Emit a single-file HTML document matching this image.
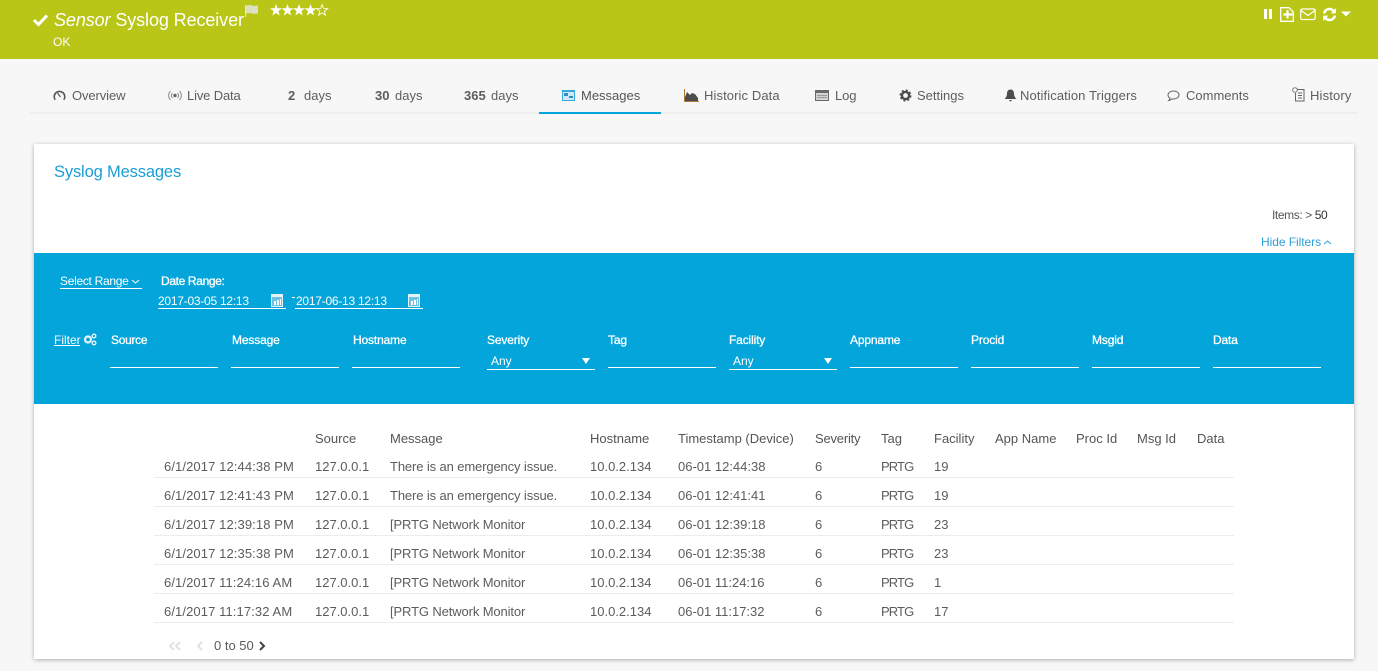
<!DOCTYPE html>
<html><head><meta charset="utf-8"><style>
html,body{margin:0;padding:0;width:1378px;height:671px;overflow:hidden;background:#f7f7f7;font-family:"Liberation Sans",sans-serif;color:#5c5c5c}
.a,svg.i{position:absolute}
.a{white-space:nowrap;line-height:16px;font-size:13px}
.tab{top:88px;color:#5e5e5e}
.th{top:431px;color:#555}
.td{color:#5c5c5c}
.w{color:#fff}
.s{font-size:12px;letter-spacing:-.25px}
.f{top:332px;font-size:12px;letter-spacing:-.15px;-webkit-text-stroke:.3px #fff;color:#fff}
.dt{letter-spacing:.1px}
.m{letter-spacing:-.12px}
.p{letter-spacing:-.9px}
.l{position:absolute;background:#fff;height:1px}
.r{position:absolute;left:154px;width:1080px;height:1px;background:#ececec}
</style></head><body>
<div class="a" style="left:0;top:0;width:1378px;height:59px;background:#b9c617"></div>
<svg class="i" style="left:32px;top:13px" width="17" height="14" viewBox="0 0 17 14"><path d="M2 7l4.500 4.500L15 2.500" fill="none" stroke="#fff" stroke-width="3"/></svg>
<div class="a w" style="left:54px;top:9px;font-size:18px;line-height:22px;letter-spacing:-.1px"><i>Sensor</i> Syslog Receiver</div>
<div class="a w" style="left:53px;top:34px;font-size:12px">OK</div>
<svg class="i" style="left:244px;top:4px" width="16" height="14" viewBox="0 0 16 14"><path d="M2 1.500l5-.5 2 1 5-.5v8l-5 .5-2-1-5 .5z" fill="#dcdfc0"/><path d="M1.500 1v12" stroke="#e8eac8"/></svg>
<svg class="i" style="left:270px;top:4px" width="60" height="13" viewBox="0 0 60 13">
<polygon fill="#fff" points="6,0 7.500,4.200 12,4.400 8.400,7.100 9.700,11.500 6,9 2.300,11.500 3.600,7.100 0,4.400 4.500,4.200"/>
<polygon fill="#fff" transform="translate(11.500 0)" points="6,0 7.500,4.200 12,4.400 8.400,7.100 9.700,11.500 6,9 2.300,11.500 3.600,7.100 0,4.400 4.500,4.200"/>
<polygon fill="#fff" transform="translate(23 0)" points="6,0 7.500,4.200 12,4.400 8.400,7.100 9.700,11.500 6,9 2.300,11.500 3.600,7.100 0,4.400 4.500,4.200"/>
<polygon fill="#fff" transform="translate(34.500 0)" points="6,0 7.500,4.200 12,4.400 8.400,7.100 9.700,11.500 6,9 2.300,11.500 3.600,7.100 0,4.400 4.500,4.200"/>
<polygon fill="none" stroke="#fff" stroke-width=".9" transform="translate(46.500 .5) scale(.93)" points="6,0 7.500,4.200 12,4.400 8.400,7.100 9.700,11.500 6,9 2.300,11.500 3.600,7.100 0,4.400 4.500,4.200"/>
</svg>
<svg class="i" style="left:1264px;top:8px" width="9" height="12"><rect x="0" y="1" width="3" height="10" fill="#fff"/><rect x="5" y="1" width="3" height="10" fill="#fff"/></svg>
<svg class="i" style="left:1280px;top:7px" width="14" height="15" viewBox="0 0 14 15"><path d="M.7.700h8.300l4.300 4.300v9.300H.7z" fill="none" stroke="#fff" stroke-width="1.300"/><path d="M7.500 3v8.500M3.500 7.500h9" stroke="#fff" stroke-width="2.200"/></svg>
<svg class="i" style="left:1300px;top:8px" width="16" height="13" viewBox="0 0 16 13"><rect x=".7" y="1" width="14.500" height="10.500" rx="1.500" fill="none" stroke="#fff" stroke-width="1.200"/><path d="M1 2.500l7 5 7-5" fill="none" stroke="#fff" stroke-width="1.200"/></svg>
<svg class="i" style="left:1322px;top:7px" width="15" height="15" viewBox="0 0 14 14"><path d="M2 6a5 5 0 0 1 9-2M12 8a5 5 0 0 1-9 2" fill="none" stroke="#fff" stroke-width="2.400"/><path d="M13 1v5H8zM1 13V8h5z" fill="#fff"/></svg>
<svg class="i" style="left:1341px;top:11px" width="10" height="6"><path d="M0 .5h10L5 5.500z" fill="#fff"/></svg>

<div class="a" style="left:30px;top:112px;width:1328px;height:2px;background:#efefef"></div>
<div class="a" style="left:539px;top:112px;width:122px;height:2px;background:#03a5da"></div>
<svg class="i" style="left:53px;top:89px" width="13" height="12" viewBox="0 0 13 12"><path d="M2.200 10.800a5.300 5.300 0 1 1 8.600 0" fill="none" stroke="#555" stroke-width="1.600"/><path d="M4.500 4l3 4" stroke="#555" stroke-width="1.200"/></svg>
<div class="a tab" style="left:72px;letter-spacing:-.1px">Overview</div>
<svg class="i" style="left:168px;top:90px" width="14" height="11" viewBox="0 0 14 11"><circle cx="7" cy="5.500" r="1.700" fill="#666"/><path d="M4.500 3a3.500 3.500 0 0 0 0 5M9.500 3a3.500 3.500 0 0 1 0 5M2.500 1a6.500 6.500 0 0 0 0 9M11.500 1a6.500 6.500 0 0 1 0 9" fill="none" stroke="#888"/></svg>
<div class="a tab" style="left:187px;letter-spacing:-.15px">Live Data</div>
<div class="a tab" style="left:288px"><b>2</b></div><div class="a tab" style="left:304px">days</div>
<div class="a tab" style="left:375px"><b>30</b></div><div class="a tab" style="left:395px">days</div>
<div class="a tab" style="left:464px"><b>365</b></div><div class="a tab" style="left:491px">days</div>
<svg class="i" style="left:562px;top:90px" width="13" height="11" viewBox="0 0 13 11" shape-rendering="crispEdges"><rect width="13" height="11" fill="#36a9dc"/><rect x="1" y="2" width="11" height="8" fill="#cfe9f6"/><rect x="2" y="3" width="4" height="3" fill="#2e8fc0"/><rect x="7" y="6" width="4" height="2" fill="#2e8fc0"/></svg>
<div class="a tab" style="left:581px;color:#555">Messages</div>
<svg class="i" style="left:684px;top:89px" width="15" height="13" viewBox="0 0 15 13"><path d="M1 12V8l2-5 3 3 2-2 3 1 3 4v3z" fill="#4d4d4d"/><path d="M.5 0v12.500H15" fill="none" stroke="#b07a3a"/></svg>
<div class="a tab" style="left:704px;letter-spacing:.1px">Historic Data</div>
<svg class="i" style="left:815px;top:90px" width="14" height="11" viewBox="0 0 14 11" shape-rendering="crispEdges"><rect width="14" height="11" fill="#6a6a6a"/><rect x="1" y="3" width="12" height="7" fill="#d4d4d4"/><rect x="2" y="5" width="10" height="1" fill="#999"/><rect x="2" y="7" width="10" height="1" fill="#999"/></svg>
<div class="a tab" style="left:835px;letter-spacing:-.1px">Log</div>
<svg class="i" style="left:899px;top:89px" width="13" height="13" viewBox="0 0 13 13"><circle cx="6.500" cy="6.500" r="3.600" fill="none" stroke="#4d4d4d" stroke-width="2.400"/><circle cx="6.500" cy="6.500" r="5" fill="none" stroke="#4d4d4d" stroke-width="2" stroke-dasharray="2 1.930"/></svg>
<div class="a tab" style="left:917px">Settings</div>
<svg class="i" style="left:1004px;top:89px" width="13" height="13" viewBox="0 0 13 13"><path d="M6.500 0.500c-2.500 0-3.500 2-3.500 4 0 3-1.500 4.500-2.500 5.500h12c-1-1-2.500-2.500-2.500-5.500 0-2-1-4-3.500-4zM5 11h3l-1.500 1.800z" fill="#4d4d4d"/></svg>
<div class="a tab" style="left:1020px;letter-spacing:.1px">Notification Triggers</div>
<svg class="i" style="left:1167px;top:90px" width="13" height="12" viewBox="0 0 13 12"><path d="M6.500 1C3.500 1 1 2.700 1 5c0 1.300.8 2.400 2 3.100-.2 1-.7 1.800-1.200 2.400 1.200-.2 2.400-.8 3.200-1.600.5.100 1 .1 1.500.1 3 0 5.500-1.700 5.500-4S9.500 1 6.500 1z" fill="none" stroke="#666"/></svg>
<div class="a tab" style="left:1186px">Comments</div>
<svg class="i" style="left:1292px;top:87px" width="13" height="15" viewBox="0 0 13 15"><circle cx="3" cy="3" r="2.300" fill="#fff" stroke="#777"/><path d="M5 2.500h7v11.500H3.500V6M6 6h4M6 8.500h4M6 11h4" fill="none" stroke="#666"/></svg>
<div class="a tab" style="left:1310px;letter-spacing:.15px">History</div>

<div class="a" style="left:34px;top:144px;width:1320px;height:515px;background:#fff;box-shadow:0 1px 4px rgba(0,0,0,.3)"></div>
<div class="a" style="left:54px;top:162px;font-size:16.500px;line-height:21px;color:#1b9ed6;letter-spacing:-.15px">Syslog Messages</div>
<div class="a" style="left:1272px;top:207px;font-size:12px;color:#555;letter-spacing:-.4px">Items: &gt; <span style="color:#333">50</span></div>
<div class="a" style="left:1261px;top:234px;font-size:12px;color:#2f9fd9;letter-spacing:-.05px">Hide Filters</div>
<svg class="i" style="left:1323px;top:240px" width="9" height="5"><path d="M1 4l3.500-3L8 4" fill="none" stroke="#2f9fd9"/></svg>
<div class="a" style="left:34px;top:253px;width:1320px;height:151px;background:#03a5da"></div>

<div class="a w" style="left:60px;top:273px;font-size:12px;letter-spacing:-.3px">Select Range</div>
<svg class="i" style="left:131px;top:279px" width="9" height="5"><path d="M1 1l3.500 3L8 1" fill="none" stroke="#fff"/></svg>
<div class="l" style="left:60px;top:288px;width:82px"></div>
<div class="a w" style="left:161px;top:273px;font-size:12px;letter-spacing:-.35px;-webkit-text-stroke:.3px #fff">Date Range:</div>
<div class="a w s" style="left:158px;top:293px">2017-03-05 12:13</div>
<svg class="i" style="left:271px;top:294px" width="12" height="13" viewBox="0 0 12 13" shape-rendering="crispEdges"><rect width="12" height="13" fill="#e3f3fa"/><rect x="1" y="3" width="10" height="9" fill="#6fc1e4"/><rect x="3" y="7" width="2" height="4" fill="#fff"/><rect x="6" y="6" width="2" height="5" fill="#fff"/><rect x="9" y="5" width="1" height="6" fill="#fff"/></svg>
<div class="l" style="left:158px;top:308px;width:128px"></div>
<div class="a" style="left:292px;top:297px;width:3px;height:1px;background:#fff"></div>
<div class="a w s" style="left:296px;top:293px">2017-06-13 12:13</div>
<svg class="i" style="left:408px;top:294px" width="12" height="13" viewBox="0 0 12 13" shape-rendering="crispEdges"><rect width="12" height="13" fill="#e3f3fa"/><rect x="1" y="3" width="10" height="9" fill="#6fc1e4"/><rect x="3" y="7" width="2" height="4" fill="#fff"/><rect x="6" y="6" width="2" height="5" fill="#fff"/><rect x="9" y="5" width="1" height="6" fill="#fff"/></svg>
<div class="l" style="left:295px;top:308px;width:128px"></div>

<div class="a w" style="left:54px;top:332px;font-size:12px">Filter</div>
<div class="l" style="left:54px;top:345px;width:26px"></div>
<svg class="i" style="left:83px;top:333px" width="14" height="13" viewBox="0 0 14 13"><circle cx="5" cy="6.500" r="3" fill="none" stroke="#e8f6fb" stroke-width="2.200"/><circle cx="11" cy="3" r="1.800" fill="none" stroke="#e8f6fb" stroke-width="1.400"/><circle cx="11" cy="10" r="1.800" fill="none" stroke="#e8f6fb" stroke-width="1.400"/></svg>
<div class="a f" style="left:111px;letter-spacing:-.3px">Source</div><div class="l" style="left:110px;top:367px;width:108px"></div>
<div class="a f" style="left:232px">Message</div><div class="l" style="left:231px;top:367px;width:108px"></div>
<div class="a f" style="left:353px">Hostname</div><div class="l" style="left:352px;top:367px;width:108px"></div>
<div class="a f" style="left:487px">Severity</div><div class="a w" style="left:491px;top:353px;font-size:12px">Any</div><svg class="i" style="left:582px;top:358px" width="8" height="6"><path d="M0 0h8L4 6z" fill="#fff"/></svg><div class="l" style="left:487px;top:369px;width:108px"></div>
<div class="a f" style="left:608px">Tag</div><div class="l" style="left:608px;top:367px;width:108px"></div>
<div class="a f" style="left:729px">Facility</div><div class="a w" style="left:733px;top:353px;font-size:12px">Any</div><svg class="i" style="left:824px;top:358px" width="8" height="6"><path d="M0 0h8L4 6z" fill="#fff"/></svg><div class="l" style="left:729px;top:369px;width:108px"></div>
<div class="a f" style="left:850px">Appname</div><div class="l" style="left:850px;top:367px;width:108px"></div>
<div class="a f" style="left:971px">Procid</div><div class="l" style="left:971px;top:367px;width:108px"></div>
<div class="a f" style="left:1092px">Msgid</div><div class="l" style="left:1092px;top:367px;width:108px"></div>
<div class="a f" style="left:1213px">Data</div><div class="l" style="left:1213px;top:367px;width:108px"></div>

<div class="a th" style="left:315px">Source</div>
<div class="a th" style="left:390px">Message</div>
<div class="a th" style="left:590px">Hostname</div>
<div class="a th" style="left:678px">Timestamp (Device)</div>
<div class="a th" style="left:815px;letter-spacing:-.2px">Severity</div>
<div class="a th" style="left:881px">Tag</div>
<div class="a th" style="left:934px">Facility</div>
<div class="a th" style="left:995px">App Name</div>
<div class="a th" style="left:1076px">Proc Id</div>
<div class="a th" style="left:1137px">Msg Id</div>
<div class="a th" style="left:1197px">Data</div>

<div class="a td dt" style="left:164px;top:459px">6/1/2017 12:44:38 PM</div><div class="a td" style="left:315px;top:459px">127.0.0.1</div><div class="a td m" style="left:390px;top:459px">There is an emergency issue.</div><div class="a td" style="left:590px;top:459px">10.0.2.134</div><div class="a td" style="left:678px;top:459px">06-01 12:44:38</div><div class="a td" style="left:815px;top:459px">6</div><div class="a td p" style="left:881px;top:459px">PRTG</div><div class="a td" style="left:934px;top:459px">19</div><div class="r" style="top:477px"></div>
<div class="a td dt" style="left:164px;top:488px">6/1/2017 12:41:43 PM</div><div class="a td" style="left:315px;top:488px">127.0.0.1</div><div class="a td m" style="left:390px;top:488px">There is an emergency issue.</div><div class="a td" style="left:590px;top:488px">10.0.2.134</div><div class="a td" style="left:678px;top:488px">06-01 12:41:41</div><div class="a td" style="left:815px;top:488px">6</div><div class="a td p" style="left:881px;top:488px">PRTG</div><div class="a td" style="left:934px;top:488px">19</div><div class="r" style="top:506px"></div>
<div class="a td dt" style="left:164px;top:517px">6/1/2017 12:39:18 PM</div><div class="a td" style="left:315px;top:517px">127.0.0.1</div><div class="a td m" style="left:390px;top:517px">[PRTG Network Monitor</div><div class="a td" style="left:590px;top:517px">10.0.2.134</div><div class="a td" style="left:678px;top:517px">06-01 12:39:18</div><div class="a td" style="left:815px;top:517px">6</div><div class="a td p" style="left:881px;top:517px">PRTG</div><div class="a td" style="left:934px;top:517px">23</div><div class="r" style="top:535px"></div>
<div class="a td dt" style="left:164px;top:546px">6/1/2017 12:35:38 PM</div><div class="a td" style="left:315px;top:546px">127.0.0.1</div><div class="a td m" style="left:390px;top:546px">[PRTG Network Monitor</div><div class="a td" style="left:590px;top:546px">10.0.2.134</div><div class="a td" style="left:678px;top:546px">06-01 12:35:38</div><div class="a td" style="left:815px;top:546px">6</div><div class="a td p" style="left:881px;top:546px">PRTG</div><div class="a td" style="left:934px;top:546px">23</div><div class="r" style="top:564px"></div>
<div class="a td dt" style="left:164px;top:575px">6/1/2017 11:24:16 AM</div><div class="a td" style="left:315px;top:575px">127.0.0.1</div><div class="a td m" style="left:390px;top:575px">[PRTG Network Monitor</div><div class="a td" style="left:590px;top:575px">10.0.2.134</div><div class="a td" style="left:678px;top:575px">06-01 11:24:16</div><div class="a td" style="left:815px;top:575px">6</div><div class="a td p" style="left:881px;top:575px">PRTG</div><div class="a td" style="left:934px;top:575px">1</div><div class="r" style="top:593px"></div>
<div class="a td dt" style="left:164px;top:604px">6/1/2017 11:17:32 AM</div><div class="a td" style="left:315px;top:604px">127.0.0.1</div><div class="a td m" style="left:390px;top:604px">[PRTG Network Monitor</div><div class="a td" style="left:590px;top:604px">10.0.2.134</div><div class="a td" style="left:678px;top:604px">06-01 11:17:32</div><div class="a td" style="left:815px;top:604px">6</div><div class="a td p" style="left:881px;top:604px">PRTG</div><div class="a td" style="left:934px;top:604px">17</div><div class="r" style="top:622px"></div>

<svg class="i" style="left:168px;top:641px" width="40" height="10" viewBox="0 0 40 10"><path d="M6 1L2 5l4 4M12 1L8 5l4 4M34 1l-4 4 4 4" fill="none" stroke="#e2e2e2" stroke-width="2"/></svg>
<div class="a" style="left:214px;top:638px;color:#5c5c5c">0 to 50</div>
<svg class="i" style="left:258px;top:641px" width="8" height="10" viewBox="0 0 8 10"><path d="M2 1l4 4-4 4" fill="none" stroke="#444" stroke-width="2"/></svg>
</body></html>
